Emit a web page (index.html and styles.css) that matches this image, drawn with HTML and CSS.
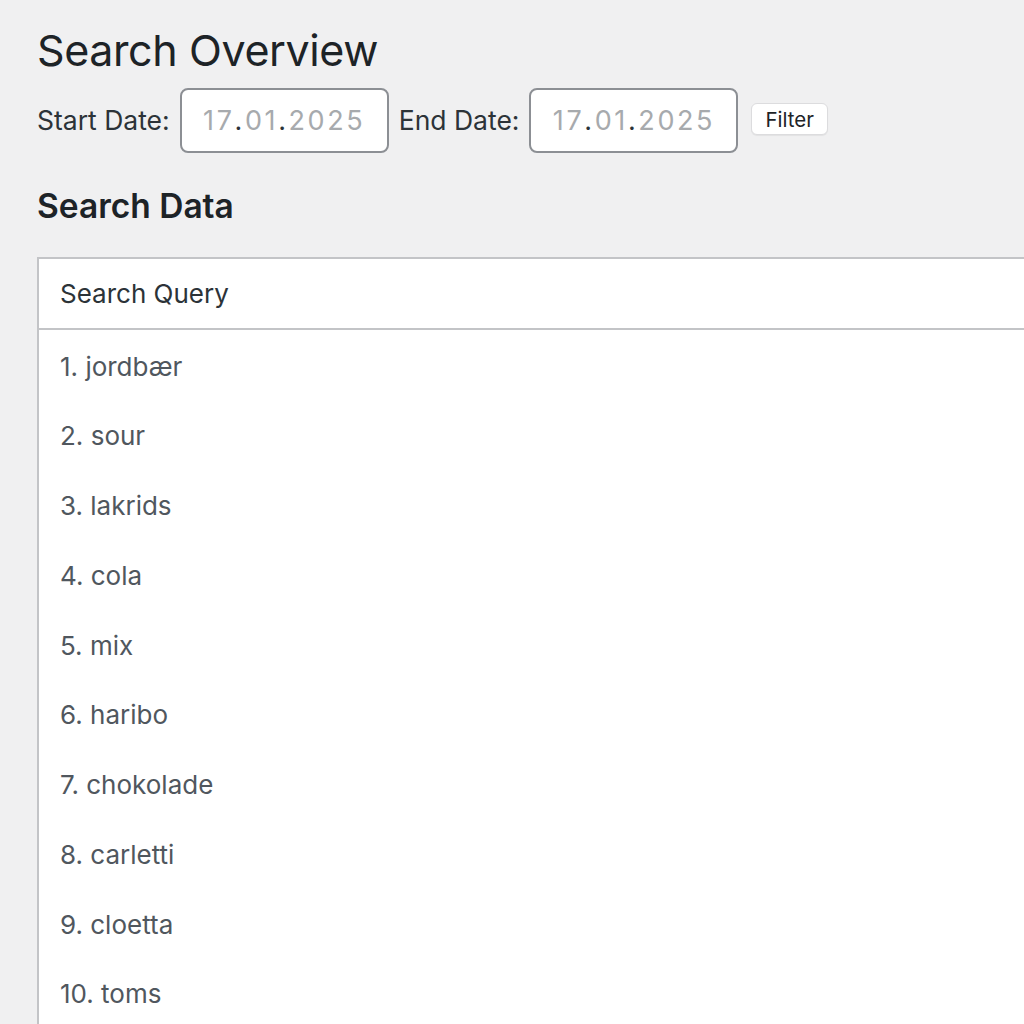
FILE: index.html
```html
<!DOCTYPE html>
<html lang="da">
<head>
<meta charset="utf-8">
<title>Search Overview</title>
<link rel="stylesheet" href="styles.css">
</head>
<body>
<div class="wrap">
  <h1 class="title">Search Overview</h1>
  <form class="filter-row">
    <label class="lbl">Start Date:</label>
    <div class="date-input"><span class="d">17</span><span class="sep">.</span><span class="d">01</span><span class="sep">.</span><span class="d">2025</span></div>
    <label class="lbl">End Date:</label>
    <div class="date-input"><span class="d">17</span><span class="sep">.</span><span class="d">01</span><span class="sep">.</span><span class="d">2025</span></div>
    <button type="button" class="btn">Filter</button>
  </form>
  <h2 class="section">Search Data</h2>
  <table class="data">
    <thead>
      <tr><th>Search Query</th></tr>
    </thead>
    <tbody>
      <tr><td>1. jordbær</td></tr>
      <tr><td>2. sour</td></tr>
      <tr><td>3. lakrids</td></tr>
      <tr><td>4. cola</td></tr>
      <tr><td>5. mix</td></tr>
      <tr><td>6. haribo</td></tr>
      <tr><td>7. chokolade</td></tr>
      <tr><td>8. carletti</td></tr>
      <tr><td>9. cloetta</td></tr>
      <tr><td>10. toms</td></tr>
    </tbody>
  </table>
</div>
</body>
</html>
```
FILE: styles.css
```css
html, body {
  margin: 0;
  padding: 0;
  overflow: hidden;
  background: #f0f0f1;
}
body {
  font-family: Inter, "Noto Sans", "Liberation Sans", sans-serif;
  color: #3c434a;
  width: 1024px;
  height: 1024px;
}
.wrap {
  padding: 0 0 0 37px;
}
.title {
  margin: 0;
  padding-top: 22px;
  font-size: 43px;
  font-weight: 400;
  line-height: 56px;
  color: #1d2327;
  letter-spacing: -0.4px;
}
.filter-row {
  display: flex;
  align-items: center;
  margin-top: 10px;
  height: 64px;
}
.lbl {
  font-size: 26.5px;
  color: #2c3338;
  margin-right: 10px;
}
.date-input {
  box-sizing: border-box;
  width: 209px;
  height: 65px;
  border: 2px solid #8c8f94;
  border-radius: 8px;
  background: #fff;
  display: flex;
  align-items: center;
  justify-content: center;
  font-size: 27px;
  letter-spacing: 2.6px;
  margin-right: 10px;
}
.date-input .d { color: #a7aaad; }
.date-input .sep { color: #2c3338; }
.btn {
  font-family: inherit;
  margin-left: 3px;
  margin-top: -2px;
  height: 32px;
  padding: 0 13px;
  border: 1px solid #dcdcde;
  border-radius: 6px;
  background: #fff;
  color: #1d2327;
  font-size: 20.5px;
  box-shadow: 0 1px 1px rgba(0,0,0,0.06);
}
.section {
  margin: 0;
  margin-top: 34px;
  font-size: 33.5px;
  font-weight: 600;
  line-height: 40px;
  color: #1d2327;
}
.data {
  margin-top: 31px;
  width: 1040px;
  border-collapse: collapse;
  background: #fff;
  border: 2px solid #c3c4c7;
}
.data th {
  text-align: left;
  font-weight: 400;
  font-size: 26px;
  color: #2c3338;
  height: 71px;
  padding: 0 0 0 21px;
  border-bottom: 2px solid #c3c4c7;
  box-sizing: border-box;
}
.data td {
  font-size: 26px;
  color: #50575e;
  height: 69.8px;
  padding: 4px 0 0 21px;
  box-sizing: border-box;
}
```
